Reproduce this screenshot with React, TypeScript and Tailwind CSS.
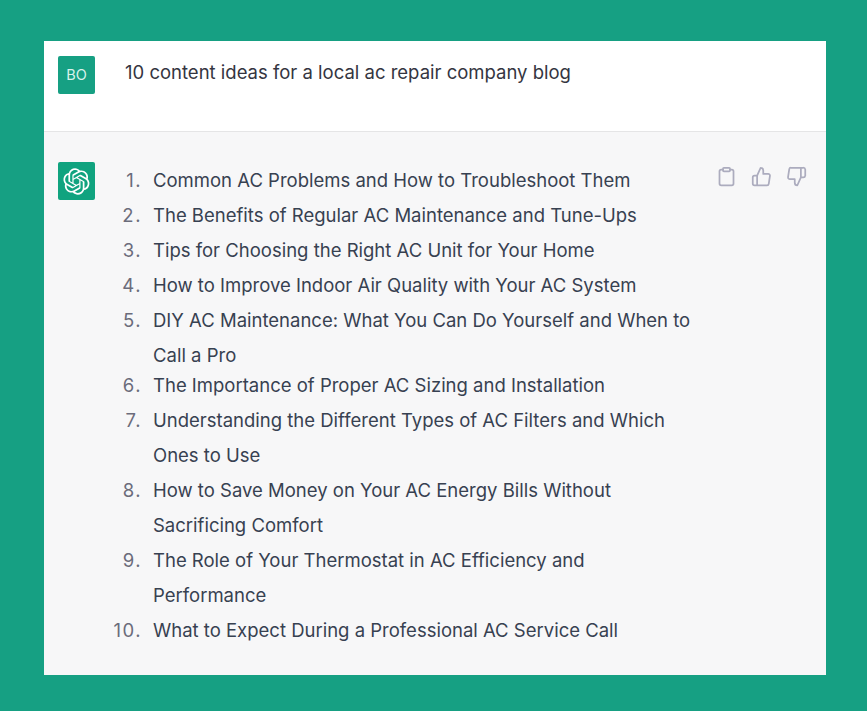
const ideas = [
  "Common AC Problems and How to Troubleshoot Them",
  "The Benefits of Regular AC Maintenance and Tune-Ups",
  "Tips for Choosing the Right AC Unit for Your Home",
  "How to Improve Indoor Air Quality with Your AC System",
  "DIY AC Maintenance: What You Can Do Yourself and When to Call a Pro",
  "The Importance of Proper AC Sizing and Installation",
  "Understanding the Different Types of AC Filters and Which Ones to Use",
  "How to Save Money on Your AC Energy Bills Without Sacrificing Comfort",
  "The Role of Your Thermostat in AC Efficiency and Performance",
  "What to Expect During a Professional AC Service Call",
];

const logoPath =
  "M37.5324 16.8707C37.9808 15.5241 38.1363 14.0974 37.9886 12.6859C37.8409 11.2744 37.3934 9.91076 36.676 8.68622C35.6126 6.83404 33.9882 5.3676 32.0373 4.4985C30.0864 3.62941 27.9098 3.40259 25.8215 3.85078C24.8796 2.7893 23.7219 1.94125 22.4257 1.36341C21.1295 0.785575 19.7249 0.491269 18.3058 0.500197C16.1708 0.495044 14.0893 1.16803 12.3614 2.42214C10.6335 3.67624 9.34853 5.44666 8.6917 7.47815C7.30085 7.76286 5.98686 8.3414 4.8377 9.17505C3.68854 10.0087 2.73073 11.0782 2.02839 12.312C0.956464 14.1591 0.498905 16.2988 0.721698 18.4228C0.944492 20.5467 1.83612 22.5449 3.268 24.1293C2.81966 25.4759 2.66413 26.9026 2.81182 28.3141C2.95951 29.7256 3.40701 31.0892 4.12437 32.3138C5.18791 34.1659 6.8123 35.6322 8.76321 36.5013C10.7141 37.3704 12.8907 37.5973 14.9789 37.1492C15.9208 38.2107 17.0786 39.0587 18.3747 39.6366C19.6709 40.2144 21.0755 40.5087 22.4946 40.4998C24.6307 40.5054 26.7133 39.8321 28.4418 38.5772C30.1704 37.3223 31.4556 35.5506 32.1119 33.5179C33.5027 33.2332 34.8167 32.6547 35.9659 31.821C37.115 30.9874 38.0728 29.9178 38.7752 28.684C39.8458 26.8371 40.3023 24.6979 40.0789 22.5748C39.8556 20.4517 38.9639 18.4544 37.5324 16.8707ZM22.4978 37.8849C20.7443 37.8874 19.0459 37.2733 17.6994 36.1501C17.7601 36.117 17.8666 36.0586 17.936 36.0161L25.9004 31.4156C26.1003 31.3019 26.2663 31.137 26.3813 30.9378C26.4964 30.7386 26.5563 30.5124 26.5549 30.2825V19.0542L29.9213 20.998C29.9389 21.0068 29.9541 21.0198 29.9656 21.0359C29.977 21.052 29.9842 21.0707 29.9867 21.0902V30.3889C29.9842 32.375 29.1946 34.2791 27.7909 35.6841C26.3872 37.0892 24.4838 37.8806 22.4978 37.8849ZM6.39227 31.0064C5.51397 29.4888 5.19742 27.7107 5.49804 25.9832C5.55718 26.0187 5.66048 26.0818 5.73461 26.1244L13.699 30.7248C13.8975 30.8408 14.1233 30.902 14.3532 30.902C14.583 30.902 14.8088 30.8408 15.0073 30.7248L24.731 25.1103V28.9979C24.7321 29.0177 24.7283 29.0376 24.7199 29.0556C24.7115 29.0736 24.6988 29.0893 24.6829 29.1012L16.6317 33.7497C14.9096 34.7416 12.8643 35.0097 10.9447 34.4954C9.02506 33.9811 7.38785 32.7263 6.39227 31.0064ZM4.29707 13.6194C5.17156 12.0998 6.55279 10.9364 8.19885 10.3327C8.19885 10.4013 8.19491 10.5228 8.19491 10.6071V19.808C8.19351 20.0378 8.25334 20.2638 8.36823 20.4629C8.48312 20.6619 8.64893 20.8267 8.84863 20.9404L18.5723 26.5542L15.206 28.4979C15.1894 28.5089 15.1703 28.5155 15.1505 28.5173C15.1307 28.5191 15.1107 28.516 15.0924 28.5082L7.04046 23.8557C5.32135 22.8601 4.06716 21.2235 3.55289 19.3046C3.03862 17.3858 3.30624 15.3413 4.29707 13.6194ZM31.955 20.0556L22.2312 14.4411L25.5976 12.4981C25.6142 12.4872 25.6333 12.4805 25.6531 12.4787C25.6729 12.4769 25.6928 12.4801 25.7111 12.4879L33.7631 17.1364C34.9967 17.849 36.0017 18.8982 36.6606 20.1613C37.3194 21.4244 37.6047 22.849 37.4832 24.2684C37.3617 25.6878 36.8382 27.0432 35.9743 28.1759C35.1103 29.3086 33.9415 30.1717 32.6047 30.6641C32.6047 30.5947 32.6047 30.4733 32.6047 30.3889V21.188C32.6066 20.9586 32.5474 20.7328 32.4332 20.5338C32.319 20.3348 32.154 20.1698 31.955 20.0556ZM35.3055 15.0128C35.2464 14.9765 35.1431 14.9142 35.069 14.8717L27.1045 10.2712C26.906 10.1554 26.6803 10.0943 26.4504 10.0943C26.2206 10.0943 25.9948 10.1554 25.7963 10.2712L16.0726 15.8858V11.9982C16.0715 11.9783 16.0753 11.9585 16.0837 11.9405C16.0921 11.9225 16.1048 11.9068 16.1207 11.8949L24.1719 7.25025C25.4053 6.53903 26.8158 6.19376 28.2383 6.25482C29.6608 6.31589 31.0364 6.78077 32.2044 7.59508C33.3723 8.40939 34.2842 9.53945 34.8334 10.8531C35.3826 12.1667 35.5464 13.6095 35.3055 15.0128ZM14.2424 21.9419L10.8752 19.9981C10.8576 19.9893 10.8423 19.9763 10.8309 19.9602C10.8195 19.9441 10.8122 19.9254 10.8098 19.9058V10.6071C10.8107 9.18295 11.2173 7.78848 11.9819 6.58696C12.7466 5.38544 13.8377 4.42659 15.1275 3.82264C16.4173 3.21869 17.8524 2.99464 19.2649 3.1767C20.6775 3.35876 22.0089 3.93941 23.1034 4.85067C23.0427 4.88379 22.937 4.94215 22.8668 4.98473L14.9024 9.58517C14.7025 9.69878 14.5366 9.86356 14.4215 10.0626C14.3065 10.2616 14.2466 10.4877 14.2479 10.7175L14.2424 21.9419ZM16.071 17.9991L20.4018 15.4978L24.7325 17.9975V22.9985L20.4018 25.4983L16.071 22.9985V17.9991Z";

function ClipboardIcon() {
  return (
    <svg viewBox="0 0 24 24" fill="none" stroke="currentColor" strokeWidth="2" strokeLinecap="round" strokeLinejoin="round" className="w-[21px] h-[21px]">
      <path d="M16 4h2a2 2 0 0 1 2 2v14a2 2 0 0 1-2 2H6a2 2 0 0 1-2-2V6a2 2 0 0 1 2-2h2" />
      <rect x="8" y="2" width="8" height="4" rx="1" ry="1" />
    </svg>
  );
}

function ThumbUpIcon() {
  return (
    <svg viewBox="0 0 24 24" fill="none" stroke="currentColor" strokeWidth="2" strokeLinecap="round" strokeLinejoin="round" className="w-[21px] h-[21px]">
      <path d="M14 9V5a3 3 0 0 0-3-3l-4 9v11h11.28a2 2 0 0 0 2-1.7l1.38-9a2 2 0 0 0-2-2.3zM7 22H4a2 2 0 0 1-2-2v-7a2 2 0 0 1 2-2h3" />
    </svg>
  );
}

function ThumbDownIcon() {
  return (
    <svg viewBox="0 0 24 24" fill="none" stroke="currentColor" strokeWidth="2" strokeLinecap="round" strokeLinejoin="round" className="w-[21px] h-[21px]">
      <path d="M10 15v4a3 3 0 0 0 3 3l4-9V2H5.72a2 2 0 0 0-2 1.7l-1.38 9a2 2 0 0 0 2 2.3zm7-13h2.67A2.31 2.31 0 0 1 22 4v7a2.31 2.31 0 0 1-2.33 2H17" />
    </svg>
  );
}

export default function App() {
  return (
    <div className="min-h-screen bg-[#16a083] pt-[41px] pb-[36px] pl-[44px] pr-[41px] font-['Inter',sans-serif]">
      {/* prompt */}
      <section className="h-[91px] bg-white border-b border-[#e5e5e6] pl-[14px] pt-[15px] flex">
        <div className="w-[37px] h-[38px] rounded-[2px] bg-[#16a083] text-[#d9f2ec] text-[14.5px] flex items-center justify-center">BO</div>
        <p className="ml-[30px] text-[18.5px] leading-[33px] text-[#343541]">10 content ideas for a local ac repair company blog</p>
      </section>

      {/* answer */}
      <section className="h-[543px] bg-[#f7f7f8] pl-[14px] pt-[30px] flex">
        <div className="w-[37px] h-[38px] rounded-[2px] bg-[#10a37f] text-white flex items-center justify-center">
          <svg viewBox="0 0 41 41" fill="currentColor" className="w-[27px] h-[27px]">
            <path d={logoPath} />
          </svg>
        </div>
        <ol className="ml-[16px] mt-[1px] w-[587px] text-[18.5px] leading-[35px] text-[#374151]">
          {ideas.map((idea, i) => (
            <li key={idea} className={i === 5 ? "flex -mt-[5px]" : "flex"}>
              <span className="w-[31px] shrink-0 text-right whitespace-nowrap tracking-[1.5px] text-[#6b6c7b]">{i + 1}.</span>
              <span className="ml-[11px] w-[545px]">{idea}</span>
            </li>
          ))}
        </ol>
        <div className="ml-[18px] mt-[4px] h-[21px] flex gap-[14px] text-[#acacbe]">
          <ClipboardIcon />
          <ThumbUpIcon />
          <ThumbDownIcon />
        </div>
      </section>
    </div>
  );
}
